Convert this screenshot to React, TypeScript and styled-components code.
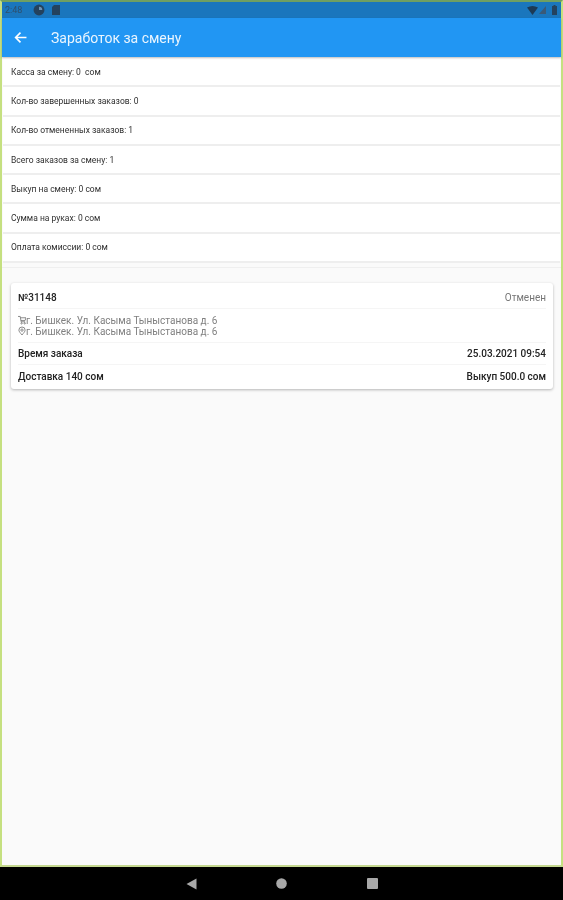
import React from "react";
import styled, { createGlobalStyle } from "styled-components";

const Global = createGlobalStyle`
  html, body { margin: 0; padding: 0; background: #000; }
  #root { width: 563px; height: 900px; overflow: hidden; }
  * { box-sizing: border-box; }
`;

const Screen = styled.div`
  width: 563px;
  height: 900px;
  display: flex;
  flex-direction: column;
  font-family: Roboto, "Liberation Sans", sans-serif;
  filter: blur(0.45px);
`;

const Frame = styled.div`
  flex: 1;
  min-height: 0;
  display: flex;
  flex-direction: column;
  background: #fafafa;
  border-top: 2px solid #6f9f62;
  border-left: 2px solid #c5e080;
  border-right: 2px solid #c5e080;
  border-bottom: 2px solid #c5d890;
`;

const StatusBar = styled.div`
  height: 16px;
  background: #1a76bd;
  display: flex;
  align-items: center;
  padding: 0 4px 0 3px;
  gap: 7px;
  flex: none;
`;

const Clock = styled.span`
  font-size: 9px;
  color: #2f4f6c;
  width: 20px;
  margin-right: 1px;
`;

const StatusSpacer = styled.div`
  flex: 1;
`;

const StatusRight = styled.div`
  display: flex;
  align-items: center;
  gap: 1px;
`;

const AppBar = styled.header`
  height: 39px;
  flex: none;
  background: #2196f3;
  display: flex;
  align-items: center;
  padding: 0 0 0 12px;
  color: #fff;
  box-shadow: 0 1px 2px rgba(0, 0, 0, 0.25);
  z-index: 1;
`;

const Title = styled.h1`
  margin: 0 0 0 24px;
  font-size: 14px;
  font-weight: 400;
  color: #eaf5fe;
`;

const Stats = styled.section`
  display: flex;
  flex-direction: column;
  padding: 1px 1px 0;
  height: 211px;
  flex: none;
  border-bottom: 1px solid #efefef;
`;

const StatRow = styled.div`
  height: 29.3px;
  flex: none;
  background: #fff;
  border-bottom: 2px solid #eeeeee;
  display: flex;
  align-items: center;
  padding: 0 0 0 8px;
  font-size: 8.5px;
  color: #2e2e2e;
  white-space: pre;
`;

const Card = styled.article`
  margin: 15px 8px 0 9px;
  height: 106px;
  background: #fff;
  border-radius: 3px;
  box-shadow: 0 1px 3px rgba(0, 0, 0, 0.28);
  display: flex;
  flex-direction: column;
  padding: 0 7px;
`;

const CardRow = styled.div<{ $h: number; $top?: number; $line?: boolean }>`
  height: ${(p) => p.$h}px;
  padding-top: ${(p) => p.$top ?? 0}px;
  flex: none;
  display: flex;
  align-items: center;
  justify-content: space-between;
  border-bottom: ${(p) => (p.$line ? "1px solid #f5f5f5" : "none")};
`;

const Strong = styled.span`
  font-size: 10px;
  font-weight: 500;
  color: #222;
`;

const Status = styled.span`
  font-size: 10px;
  color: #777;
`;

const Addresses = styled.div`
  height: 34px;
  flex: none;
  display: flex;
  flex-direction: column;
  justify-content: center;
  border-bottom: 1px solid #f5f5f5;
`;

const AddressRow = styled.div`
  display: flex;
  align-items: center;
  height: 11px;
  font-size: 10px;
  color: #808080;
`;

const NavBar = styled.nav`
  height: 33px;
  flex: none;
  background: #000;
  display: flex;
  align-items: center;
  justify-content: center;
  gap: 79.5px;
`;

const stats = [
  "Касса за смену: 0  сом",
  "Кол-во завершенных заказов: 0",
  "Кол-во отмененных заказов: 1",
  "Всего заказов за смену: 1",
  "Выкуп на смену: 0 сом",
  "Сумма на руках: 0 сом",
  "Оплата комиссии: 0 сом",
];

const address = "г. Бишкек. Ул. Касыма Тыныстанова д. 6";

export default function App() {
  return (
    <Screen>
      <Global />
      <Frame>
        <StatusBar>
          <Clock>2:48</Clock>
          <svg width="12" height="12" viewBox="0 0 11 11">
            <circle cx="5.5" cy="5.5" r="5" fill="#24425e" />
            <path d="M5.5 2.5a3 3 0 0 1 3 3h-3z" fill="#6d93b5" />
          </svg>
          <svg width="8" height="10" viewBox="0 0 8 10">
            <path d="M2 0h6v10H0V2z" fill="#24425e" />
          </svg>
          <StatusSpacer />
          <StatusRight>
            <svg width="11" height="9" viewBox="0 0 11 9">
              <path d="M0 1.5Q5.5-1.5 11 1.5L5.5 9z" fill="#1d3a55" />
            </svg>
            <svg width="7" height="8" viewBox="0 0 7 8">
              <path d="M7 0v8H0z" fill="#3a5a78" />
            </svg>
            <svg width="5" height="10" viewBox="0 0 5 10" style={{ marginLeft: 5 }}>
              <path d="M1.5 0h2v1H5v9H0V1h1.5z" fill="#24425e" />
            </svg>
          </StatusRight>
        </StatusBar>
        <AppBar>
          <svg width="13" height="13" viewBox="0 0 24 24" fill="none" stroke="#fff" strokeWidth="3">
            <path d="M23 12H3M12 3l-9 9 9 9" />
          </svg>
          <Title>Заработок за смену</Title>
        </AppBar>
        <Stats>
          {stats.map((s) => (
            <StatRow key={s}>{s}</StatRow>
          ))}
        </Stats>
        <Card>
          <CardRow $h={26} $top={4} $line>
            <Strong>№31148</Strong>
            <Status>Отменен</Status>
          </CardRow>
          <Addresses>
            <AddressRow>
              <svg width="8" height="10" viewBox="0 0 9 10" fill="none" stroke="#707070" strokeWidth="0.9">
                <path d="M0 1h2.500l1 6H8M3 2.500H9L8 5.500H3.300" />
                <circle cx="4" cy="8.700" r=".8" />
                <circle cx="7.500" cy="8.700" r=".8" />
              </svg>
              {address}
            </AddressRow>
            <AddressRow>
              <svg width="8" height="10" viewBox="0 0 9 10" fill="none" stroke="#707070" strokeWidth="0.9">
                <path d="M4.500 9.500C2.500 7 1 5.500 1 4a3.500 3.500 0 0 1 7 0c0 1.500-1.500 3-3.500 5.500z" />
                <circle cx="4.500" cy="4" r="1.300" />
              </svg>
              {address}
            </AddressRow>
          </Addresses>
          <CardRow $h={22} $line>
            <Strong>Время заказа</Strong>
            <Strong>25.03.2021 09:54</Strong>
          </CardRow>
          <CardRow $h={22}>
            <Strong>Доставка 140 сом</Strong>
            <Strong>Выкуп 500.0 сом</Strong>
          </CardRow>
        </Card>
      </Frame>
      <NavBar>
        <svg width="11" height="12" viewBox="0 0 11 12">
          <path d="M0.500 6L10.500 0.500V11.500z" fill="#a8a8a8" />
        </svg>
        <svg width="11" height="11" viewBox="0 0 11 11">
          <circle cx="5.500" cy="5.500" r="5.300" fill="#a8a8a8" />
        </svg>
        <svg width="11" height="11" viewBox="0 0 11 11">
          <rect width="11" height="11" rx="1" fill="#a8a8a8" />
        </svg>
      </NavBar>
    </Screen>
  );
}
